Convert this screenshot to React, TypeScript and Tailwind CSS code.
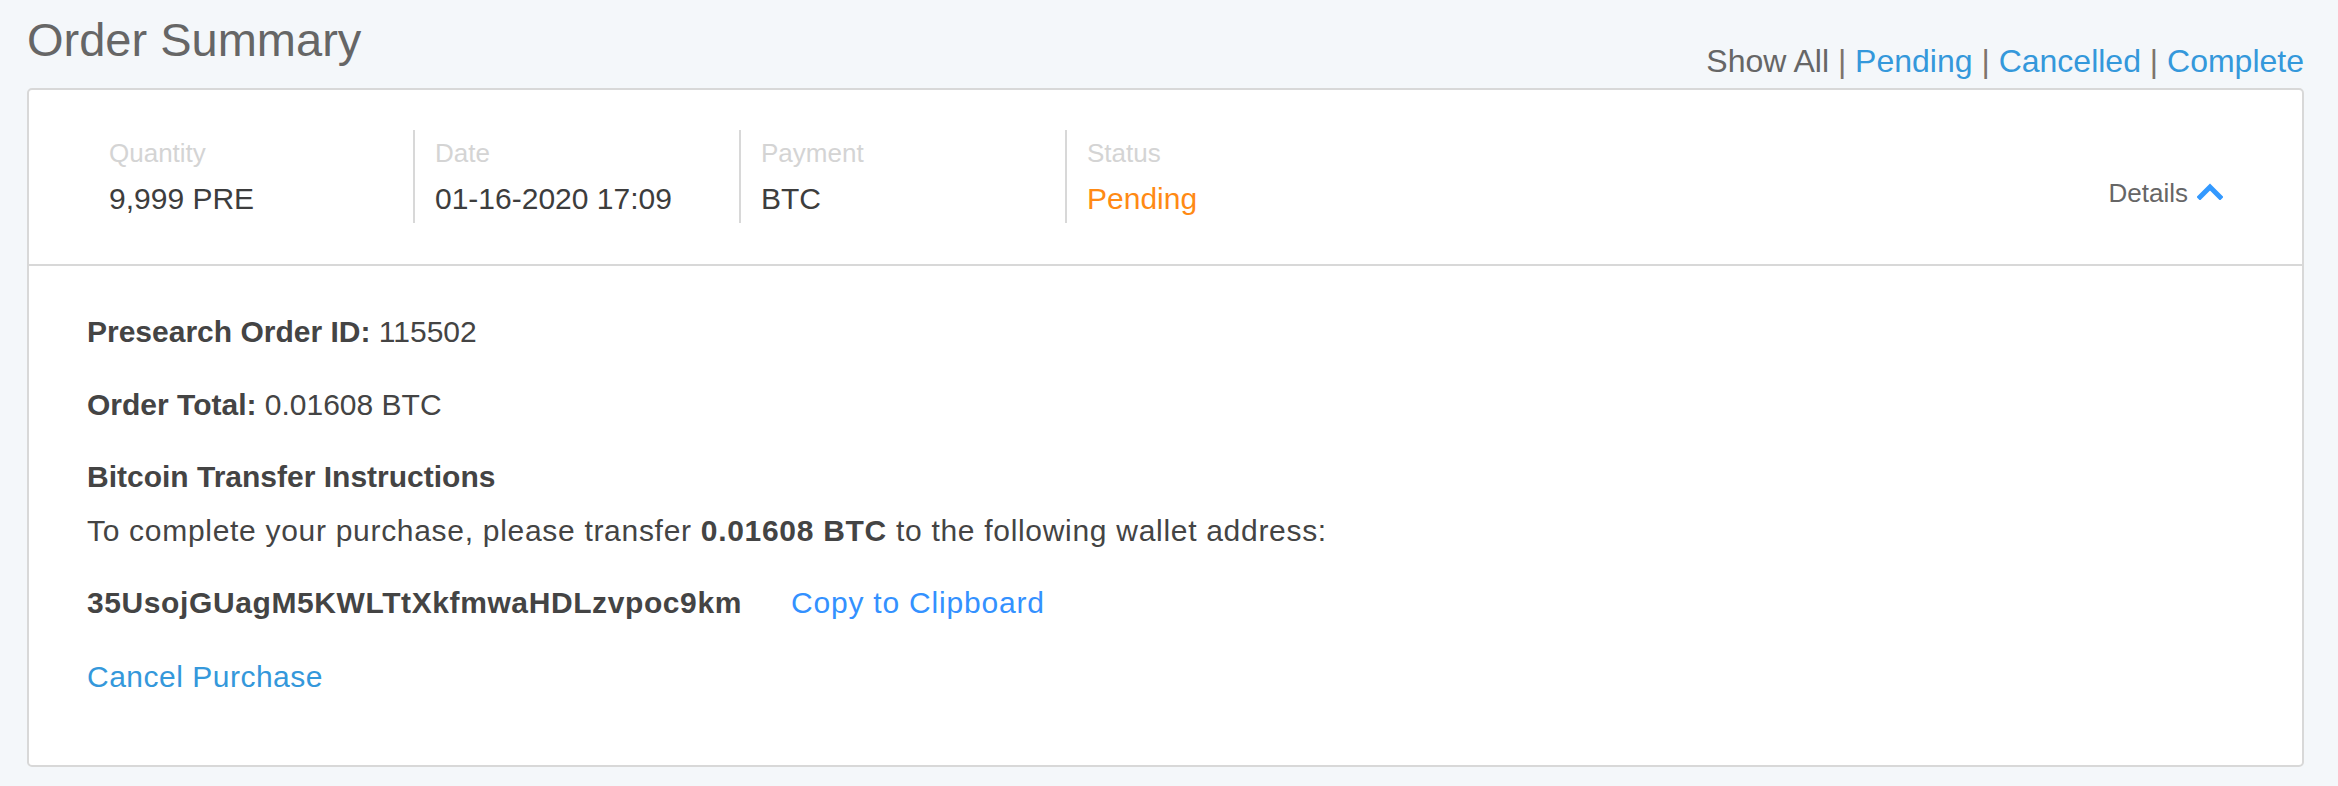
import React from 'react';

const font = { fontFamily: '"Liberation Sans", Arial, sans-serif' };

const summary = [
  { label: 'Quantity', value: '9,999 PRE' },
  { label: 'Date', value: '01-16-2020 17:09' },
  { label: 'Payment', value: 'BTC' },
  { label: 'Status', value: 'Pending', pending: true },
];

export default function App() {
  return (
    <div className="min-h-[786px] bg-[#f4f7fa] pl-[27px] pr-[34px]" style={font}>
      {/* page heading + filters */}
      <div className="flex justify-between items-start">
        <h1 className="pt-[12px] text-[47px] leading-[56px] font-normal text-[#666666]">
          Order Summary
        </h1>
        <div className="mt-[42px] text-[32px] leading-[38px] text-[#666666]">
          <a className="text-[#666666]">Show All</a>
          <span className="text-[#7d746c]"> | </span>
          <a className="text-[#3498db]">Pending</a>
          <span className="text-[#7d746c]"> | </span>
          <a className="text-[#3498db]">Cancelled</a>
          <span className="text-[#7d746c]"> | </span>
          <a className="text-[#3498db]">Complete</a>
        </div>
      </div>

      <div className="mt-[8px] bg-white border-2 border-[#d8d8d8] rounded-[5px]">
        {/* summary row */}
        <div className="flex items-start pl-[58px] pr-[79px] pt-[40px] pb-[41px] border-b-2 border-[#d8d8d8]">
          {summary.map((item, i) => (
            <div
              key={item.label}
              className={`w-[326px] h-[93px] pt-[4px] ${
                i === 0 ? 'pl-[22px]' : 'pl-[20px] border-l-2 border-[#d8d8d8]'
              }`}
            >
              <div className="text-[26px] leading-[39px] text-[#d4d4d4]">{item.label}</div>
              <div
                className={`mt-[3px] text-[30px] leading-[45px] ${
                  item.pending ? 'text-[#ff8a14]' : 'text-[#3d3d3d]'
                }`}
              >
                {item.value}
              </div>
            </div>
          ))}
          <div className="ml-auto mt-[44px] flex items-center gap-[9px]">
            <span className="text-[26px] leading-[39px] text-[#666666]">Details</span>
            <svg width="26" height="18" viewBox="0 0 26 18" className="mt-[-6px]">
              <path
                d="M3 15L13 5l10 10"
                fill="none"
                stroke="#3399ff"
                strokeWidth={5}
                strokeLinecap="square"
              />
            </svg>
          </div>
        </div>

        {/* order details */}
        <div className="pl-[58px] pt-[39px] pb-[61px] text-[30px] leading-[54px] text-[#444444]">
          <p>
            <span className="font-bold">Presearch Order ID:</span> 115502
          </p>
          <p className="mt-[19px]">
            <span className="font-bold">Order Total:</span> 0.01608 BTC
          </p>
          <p className="mt-[18px] font-bold">Bitcoin Transfer Instructions</p>
          <p className="tracking-[0.7px]">
            To complete your purchase, please transfer <span className="font-bold">0.01608 BTC</span> to the
            following wallet address:
          </p>
          <div className="mt-[18px] flex items-center gap-[49px]">
            <span className="font-bold tracking-[0.6px]">35UsojGUagM5KWLTtXkfmwaHDLzvpoc9km</span>
            <a className="text-[#3391ff] tracking-[0.8px]">Copy to Clipboard</a>
          </div>
          <p className="mt-[20px]">
            <a className="text-[#3498db] tracking-[0.5px]">Cancel Purchase</a>
          </p>
        </div>
      </div>
    </div>
  );
}
